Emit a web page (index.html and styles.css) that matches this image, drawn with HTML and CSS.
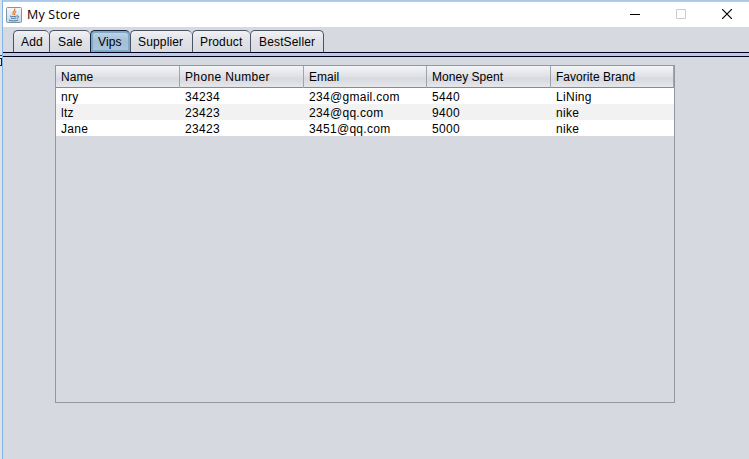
FILE: index.html
```html
<!DOCTYPE html>
<html lang="en">
<head>
<meta charset="utf-8">
<title>My Store</title>
<link rel="stylesheet" href="styles.css">
</head>
<body>
<div class="edge"><i class="edge-dot"></i><i class="edge-bowl"></i></div>
<div class="window">
  <header class="titlebar">
    <svg class="logo" width="16" height="16" viewBox="0 0 16 16">
      <defs><linearGradient id="lg" x1="0" y1="0" x2="0" y2="1"><stop offset="0" stop-color="#f4f7fa"/><stop offset="1" stop-color="#c9d6e2"/></linearGradient></defs>
      <rect x=".5" y=".5" width="15" height="15" rx="1" fill="url(#lg)" stroke="#7b95aa"/>
      <path d="M8.7 1.6C9.8 4.2 5.2 5 7.3 8M10.2 4C7.6 5.4 9.8 6.3 8.2 8" fill="none" stroke="#e8822c" stroke-width="1.3"/>
      <path d="M4 9.1c2 .7 5 .7 6.6 0M4.8 11c1.5.6 3.8.6 5.3 0M3 13c2.5 1.2 7 1.2 9.3 0M10.8 8.9c2.7-.4 2.1 2-.1 2.4" fill="none" stroke="#48779d"/>
    </svg>
    <h1 class="title">My Store</h1>
    <div class="controls">
      <svg width="10" height="10" viewBox="0 0 10 10"><path d="M0 5.5h10" stroke="#000"/></svg>
      <svg width="10" height="10" viewBox="0 0 10 10"><path d="M.5.5h9v9h-9z" fill="none" stroke="#ccc"/></svg>
      <svg width="10" height="10" viewBox="0 0 10 10"><path d="M0 0l10 10M10 0L0 10" stroke="#000" stroke-width="1.2"/></svg>
    </div>
  </header>
  <nav class="tabs">
    <span class="tab tab-add">Add</span>
    <span class="tab tab-sale">Sale</span>
    <span class="tab tab-vips active">Vips</span>
    <span class="tab tab-supplier">Supplier</span>
    <span class="tab tab-product">Product</span>
    <span class="tab tab-best">BestSeller</span>
  </nav>
  <div class="tab-line"></div>
  <main class="pane">
    <div class="row head"><span>Name</span><span class="wide">Phone Number</span><span>Email</span><span>Money Spent</span><span>Favorite Brand</span></div>
    <div class="row"><span>nry</span><span>34234</span><span>234@gmail.com</span><span>5440</span><span>LiNing</span></div>
    <div class="row alt"><span>ltz</span><span>23423</span><span>234@qq.com</span><span>9400</span><span>nike</span></div>
    <div class="row"><span>Jane</span><span>23423</span><span>3451@qq.com</span><span>5000</span><span>nike</span></div>
  </main>
</div>
</body>
</html>
```
FILE: styles.css
```css
* { box-sizing: border-box; }
body {
  margin: 0;
  width: 749px;
  height: 459px;
  display: flex;
  overflow: hidden;
  background: #d6d9e0;
  color: #000;
  font: 12px/16px "Liberation Sans", Arial, sans-serif;
  letter-spacing: .3px;
}
.edge {
  width: 2px;
  background: #dce4e8;
  padding-top: 55px;
}
.edge-dot {
  display: block;
  width: 2px;
  height: 1px;
  background: #4a3038;
}
.edge-bowl {
  display: block;
  width: 2px;
  height: 8px;
  margin-top: 2px;
  border: 1px solid #1c1c2c;
  border-left: 0;
}
.window {
  flex: 1;
  border-left: 1px solid #84b2e6;
  border-top: 1px solid #a9c8e8;
}
.titlebar {
  height: 26px;
  display: flex;
  align-items: center;
  padding: 0 17px 0 3px;
  background: #fff;
  border-top: 1px solid #b4cee8;
}
.logo { margin-top: 1px; }
.title {
  margin: 0 0 0 5px;
  font: 12.5px/16px "Open Sans", sans-serif;
  letter-spacing: .2px;
}
.controls {
  margin: -1px 0 0 auto;
  display: flex;
  gap: 36px;
}
.controls svg { display: block; }
.tabs {
  display: flex;
  height: 25px;
  padding: 3px 0 0 10px;
  letter-spacing: .15px;
}
.tab {
  height: 22px;
  padding-left: 7px;
  line-height: 23px;
  border: 1px solid #4b5362;
  border-right: 0;
  border-bottom: 0;
  border-radius: 5px 5px 0 0;
  background: linear-gradient(#f0f1f4, #dfe1e6 50%, #d9dce2);
  white-space: nowrap;
}
.tab-add { width: 36px; }
.tab-sale { width: 41px; padding-left: 8px; }
.tab-vips { width: 40px; }
.tab-supplier { width: 62px; }
.tab-product { width: 58px; }
.tab-best { width: 74px; border-right: 1px solid #4b5362; padding-left: 8px; }
.tab.active {
  border-color: #14233c;
  background: linear-gradient(#c3d7e8, #a3bfd7 50%, #abc7de);
  box-shadow: inset 0 0 0 2px #83a7c6;
}
.tab-line {
  height: 5px;
  background: #b8cce4;
  border-top: 1px solid #00001c;
  border-bottom: 1px solid #00001c;
}
.pane {
  width: 620px;
  height: 338px;
  margin: 8px 0 0 52px;
  border: 1px solid #9297a1;
}
.row {
  height: 16px;
  display: grid;
  grid-template-columns: 124px 124px 123px 124px 123px;
  background: #fff;
}
.row span { padding-left: 5px; line-height: 18px; }
.row.alt { background: #f2f2f2; }
.row.head {
  height: 22px;
  background: linear-gradient(#f3f4f6, #e1e3e8 45%, #d6d9df 60%, #e5e7eb);
  border-bottom: 1px solid #858a94;
  letter-spacing: .03px;
}
.head span { line-height: 22px; border-right: 1px solid #a0a4ad; }
.head .wide { letter-spacing: .35px; }
```
